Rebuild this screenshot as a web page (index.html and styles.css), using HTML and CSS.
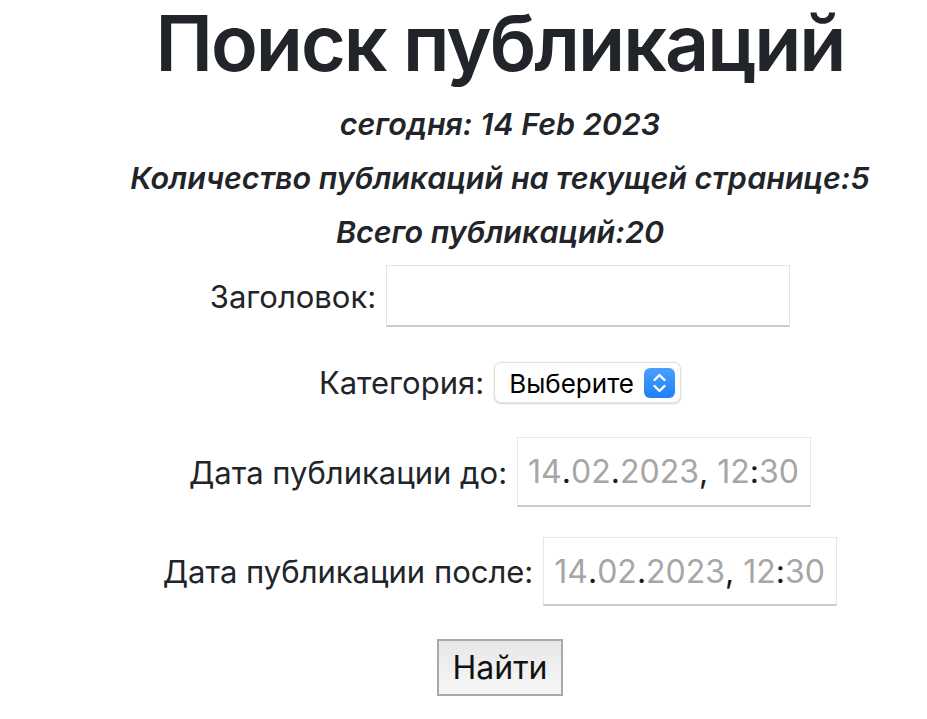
FILE: index.html
```html
<!DOCTYPE html>
<html lang="ru">
<head>
<meta charset="utf-8">
<title>Поиск публикаций</title>
<link rel="stylesheet" href="styles.css">
</head>
<body>
<main class="page">
  <h1 class="title">Поиск публикаций</h1>
  <div class="info">
    <p class="info-line">сегодня: 14 Feb 2023</p>
    <p class="info-line">Количество публикаций на текущей странице:5</p>
    <p class="info-line">Всего публикаций:20</p>
  </div>
  <form class="search">
    <div class="row row-title">
      <label class="label" for="title">Заголовок:</label>
      <input class="text-input" id="title" type="text">
    </div>
    <div class="row row-cat">
      <label class="label">Категория:</label>
      <div class="select">
        <span class="select-text">Выберите</span>
        <span class="select-btn">
          <svg width="31" height="30" viewBox="0 0 31 30"><path d="M10.5 12 L15.5 7 L20.5 12 M10.5 18 L15.5 23 L20.5 18" fill="none" stroke="#fff" stroke-width="2.4" stroke-linecap="round" stroke-linejoin="round"/></svg>
        </span>
      </div>
    </div>
    <div class="row row-before">
      <label class="label">Дата публикации до:</label>
      <div class="date-input"><span class="dv">14</span><span class="ds">.</span><span class="dv">02</span><span class="ds">.</span><span class="dv">2023</span><span class="ds">, </span><span class="dv">12</span><span class="ds">:</span><span class="dv">30</span></div>
    </div>
    <div class="row row-after">
      <label class="label">Дата публикации после:</label>
      <div class="date-input date-input-b"><span class="dv">14</span><span class="ds">.</span><span class="dv">02</span><span class="ds">.</span><span class="dv">2023</span><span class="ds">, </span><span class="dv">12</span><span class="ds">:</span><span class="dv">30</span></div>
    </div>
    <div class="row">
      <button class="btn" type="button">Найти</button>
    </div>
  </form>
</main>
</body>
</html>
```
FILE: styles.css
```css
html, body {
  margin: 0;
  padding: 0;
  background: #fff;
}
body {
  font-family: Inter, "Noto Sans", sans-serif;
  color: #212529;
}
.page {
  padding-left: 73px;
  text-align: center;
}
.title {
  margin: 1px 0 0;
  font-size: 77px;
  line-height: 84px;
  font-weight: 600;
  letter-spacing: -2px;
}
.info {
  margin-top: 12px;
}
.info-line {
  margin: 0;
  font-size: 30.5px;
  line-height: 54px;
  font-weight: 600;
  font-style: italic;
}
.search {
  margin-top: 6px;
  display: flex;
  flex-direction: column;
  align-items: center;
}
.row {
  display: flex;
  align-items: center;
  justify-content: center;
  gap: 10px;
}
.row-title { margin-bottom: 35px; }
.row-cat { margin-bottom: 34px; }
.row-before { margin-bottom: 30px; }
.row-after { margin-bottom: 33px; }
.label {
  font-size: 31px;
  font-weight: 400;
  color: #212529;
}
.text-input {
  box-sizing: border-box;
  width: 404px;
  height: 62px;
  margin: 0;
  border: 1px solid #e4e4e4;
  border-bottom: 2px solid #cdcdcd;
  background: #fff;
  outline: none;
}
.select {
  box-sizing: border-box;
  width: 187px;
  height: 41px;
  display: flex;
  align-items: center;
  justify-content: space-between;
  padding: 0 5px 0 14px;
  border: 1px solid #e0e0e0;
  border-radius: 7px;
  background: #fff;
  box-shadow: 0 1px 2px rgba(0, 0, 0, 0.18);
}
.select-text {
  font-size: 26px;
  line-height: 30px;
  padding-top: 3px;
  color: #000;
}
.select-btn {
  display: flex;
  width: 31px;
  height: 30px;
  border-radius: 6px;
  background: linear-gradient(#4aa0fd, #1f7ff6);
}
.date-input {
  box-sizing: border-box;
  width: 294px;
  height: 70px;
  display: flex;
  align-items: center;
  padding-left: 10px;
  border: 1px solid #e6e6e6;
  border-bottom: 2px solid #cdcdcd;
  font-size: 32px;
  white-space: pre;
}
.date-input-b { height: 69px; }
.dv { color: #a6a6a6; }
.ds { color: #1a1a1a; }
.btn {
  box-sizing: border-box;
  width: 126px;
  height: 57px;
  margin: 0;
  padding: 0;
  border: 2px solid #a9a9a9;
  background: linear-gradient(#e8e8e8, #f6f6f6);
  font-family: Inter, "Noto Sans", sans-serif;
  font-size: 32px;
  color: #111;
}
```
